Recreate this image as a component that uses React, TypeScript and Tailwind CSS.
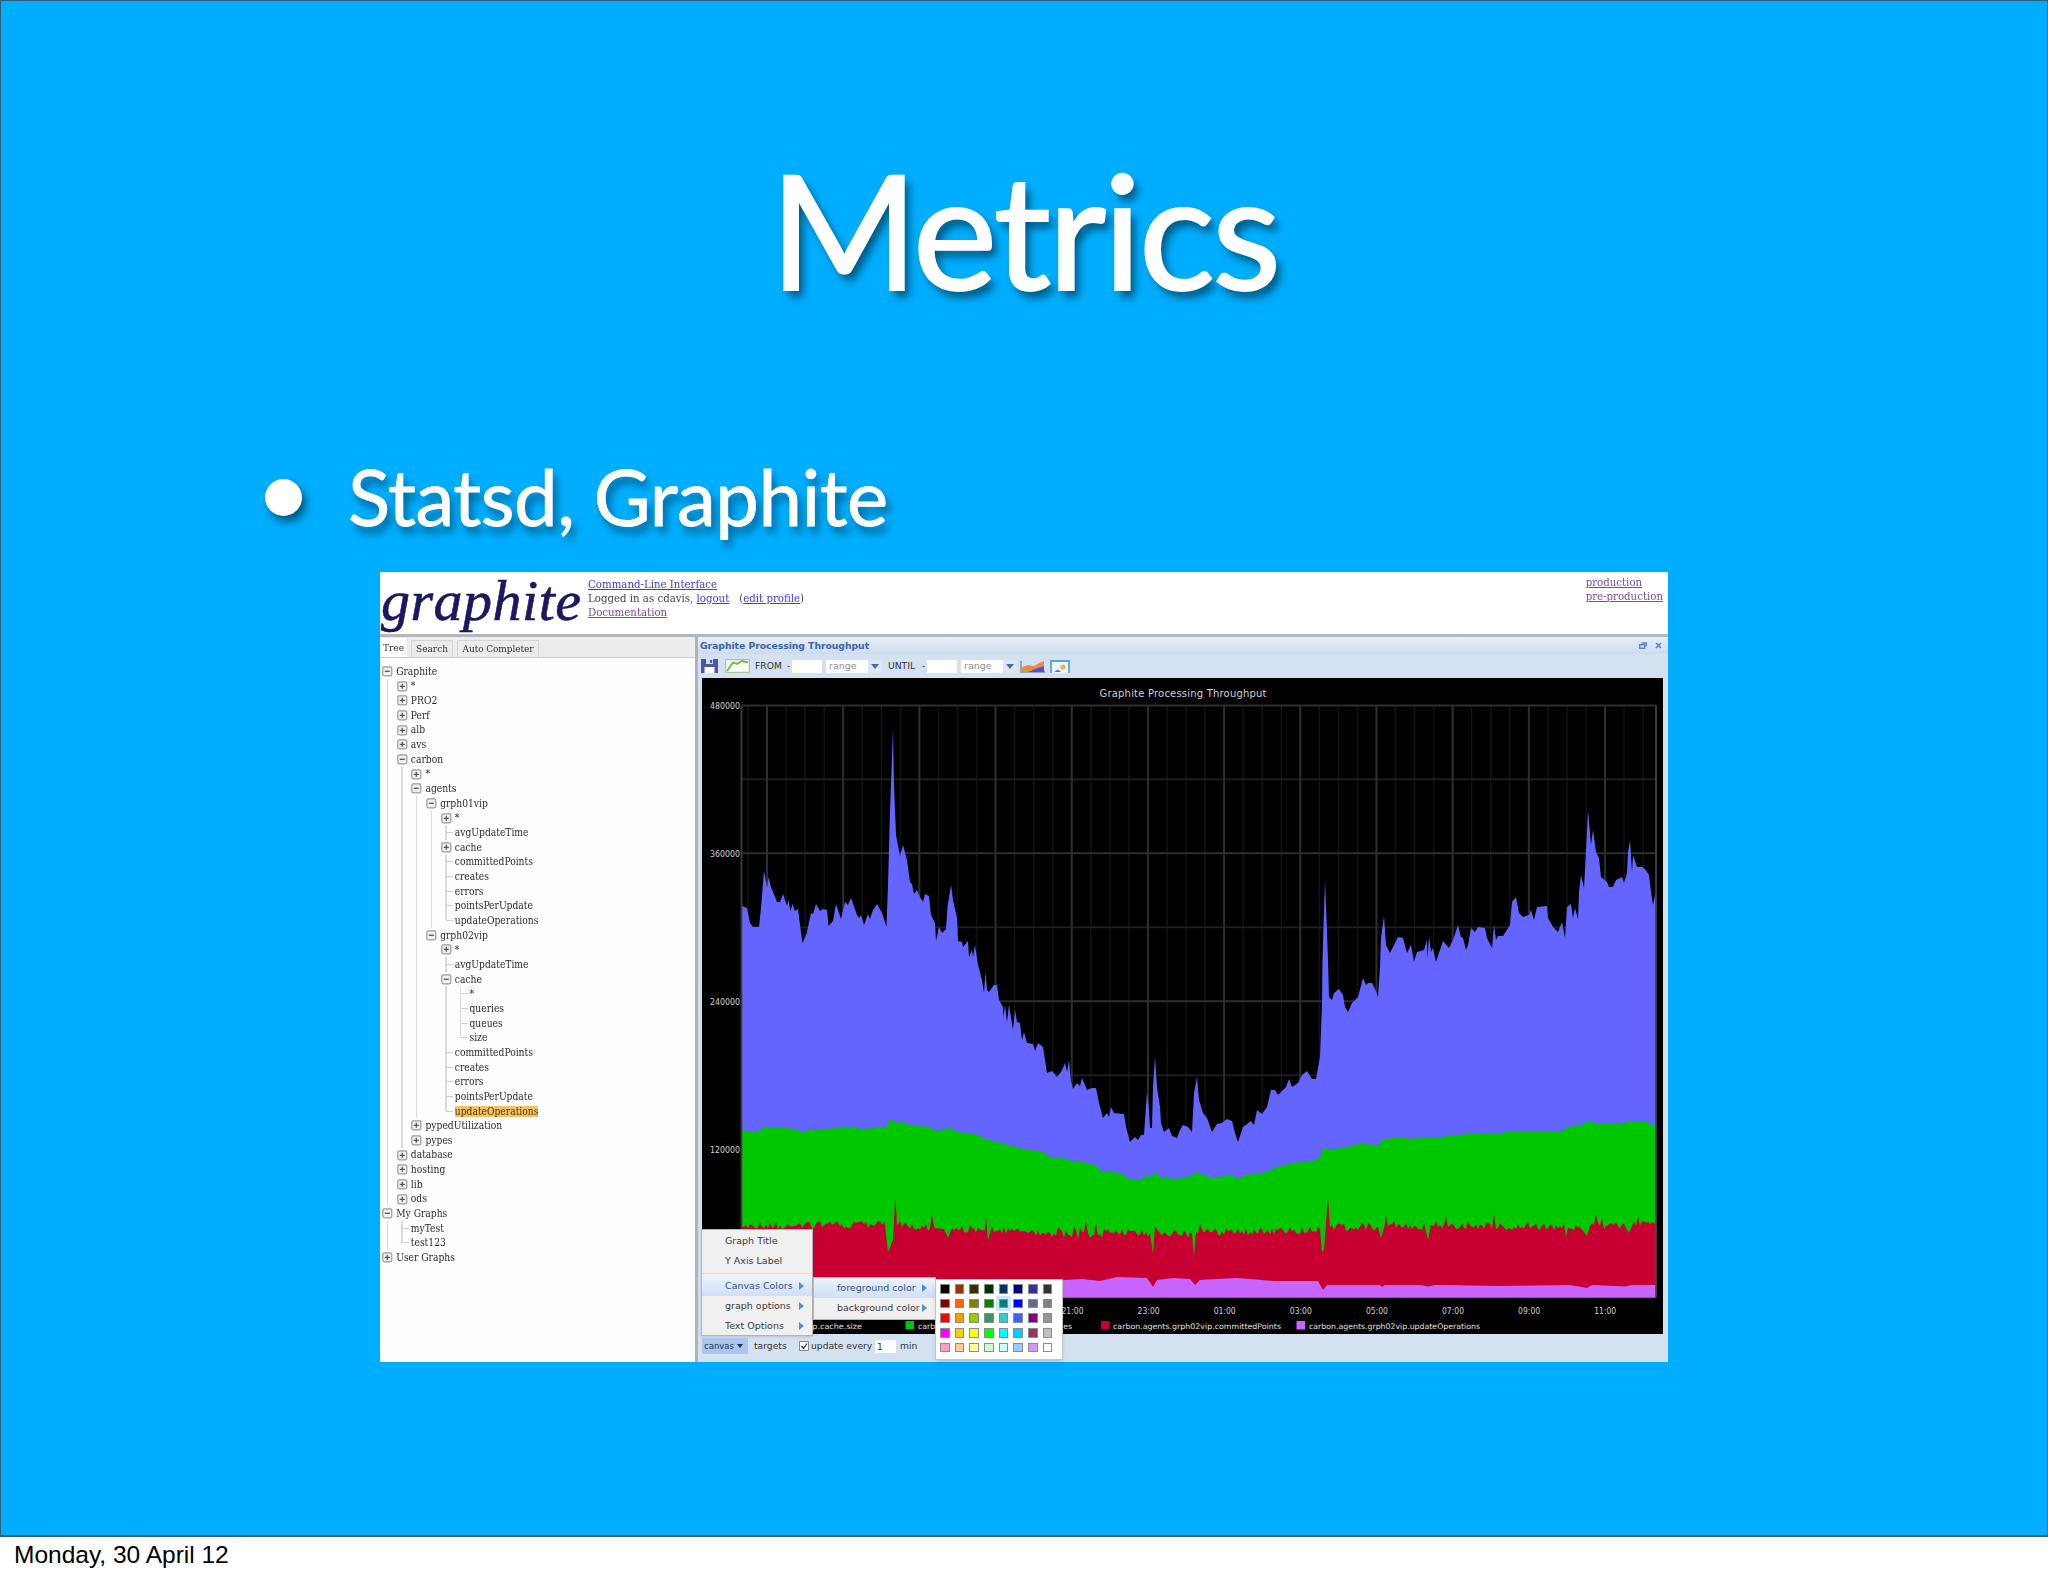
import { twMerge } from 'tailwind-merge'

interface TreeRow {
  guides: string
  kind: '+' | '-' | 'leaf' | 'last'
  label: string
  selected?: boolean
}

const treeRows: TreeRow[] = [
  { guides: '', kind: '-', label: 'Graphite' },
  { guides: '|', kind: '+', label: '*' },
  { guides: '|', kind: '+', label: 'PRO2' },
  { guides: '|', kind: '+', label: 'Perf' },
  { guides: '|', kind: '+', label: 'alb' },
  { guides: '|', kind: '+', label: 'avs' },
  { guides: '|', kind: '-', label: 'carbon' },
  { guides: '||', kind: '+', label: '*' },
  { guides: '||', kind: '-', label: 'agents' },
  { guides: '|||', kind: '-', label: 'grph01vip' },
  { guides: '||||', kind: '+', label: '*' },
  { guides: '||||', kind: 'leaf', label: 'avgUpdateTime' },
  { guides: '||||', kind: '+', label: 'cache' },
  { guides: '||||', kind: 'leaf', label: 'committedPoints' },
  { guides: '||||', kind: 'leaf', label: 'creates' },
  { guides: '||||', kind: 'leaf', label: 'errors' },
  { guides: '||||', kind: 'leaf', label: 'pointsPerUpdate' },
  { guides: '||||', kind: 'last', label: 'updateOperations' },
  { guides: '|||', kind: '-', label: 'grph02vip' },
  { guides: '||| ', kind: '+', label: '*' },
  { guides: '||| ', kind: 'leaf', label: 'avgUpdateTime' },
  { guides: '||| ', kind: '-', label: 'cache' },
  { guides: '||| |', kind: 'leaf', label: '*' },
  { guides: '||| |', kind: 'leaf', label: 'queries' },
  { guides: '||| |', kind: 'leaf', label: 'queues' },
  { guides: '||| |', kind: 'last', label: 'size' },
  { guides: '||| ', kind: 'leaf', label: 'committedPoints' },
  { guides: '||| ', kind: 'leaf', label: 'creates' },
  { guides: '||| ', kind: 'leaf', label: 'errors' },
  { guides: '||| ', kind: 'leaf', label: 'pointsPerUpdate' },
  { guides: '||| ', kind: 'last', label: 'updateOperations', selected: true },
  { guides: '||', kind: '+', label: 'pypedUtilization' },
  { guides: '||', kind: '+', label: 'pypes' },
  { guides: '|', kind: '+', label: 'database' },
  { guides: '|', kind: '+', label: 'hosting' },
  { guides: '|', kind: '+', label: 'lib' },
  { guides: '|', kind: '+', label: 'ods' },
  { guides: '', kind: '-', label: 'My Graphs' },
  { guides: '|', kind: 'leaf', label: 'myTest' },
  { guides: '|', kind: 'last', label: 'test123' },
  { guides: '', kind: '+', label: 'User Graphs' },
]

const palette = [
  ['#000000', '#993300', '#333300', '#003300', '#003366', '#000080', '#333399', '#333333'],
  ['#800000', '#ff6600', '#808000', '#008000', '#008080', '#0000ff', '#666699', '#808080'],
  ['#ff0000', '#ff9900', '#99cc00', '#339966', '#33cccc', '#3366ff', '#800080', '#969696'],
  ['#ff00ff', '#ffcc00', '#ffff00', '#00ff00', '#00ffff', '#00ccff', '#993366', '#c0c0c0'],
  ['#ff99cc', '#ffcc99', '#ffff99', '#ccffcc', '#ccffff', '#99ccff', '#cc99ff', '#ffffff'],
]

const LEFT = 742
const RIGHT = 1655.5
const TOP = 705.5
const BOTTOM = 1297.5

const cacheSize =
  '742,906 747,908 750,923 753,927 759,927 761,908 764,871 765,876 767,888 768.5,877 771,887 777,902 780,902 783,894 787,906 788.5,900 790.5,911 792.5,904 795,911 798,909 800,925 802.5,943 806.5,934 811,913 813,914 816,904 820,911 823,909 827,910 828.5,926 833,921 836,904 841,919 845,902 848,905 851,898 857,915 859,918 861,915 864,925 868,914 870,919 873,910 877,904 882,913 886.5,927 888,885 890,812 893,728 894,785 896,835 900,856 903,845 907,860 910,882 912,884 914,894 917,890 920,897 923,902 925,894 929,896 931,915 935,923 936,941 939,927 942,933 946,929 947.5,907 951,885 953,900 957,918 958,941 962,942 963,947 968,941 969,957 972,950 973,957 975,945 978,965 982,980 984,993 985.5,972 987,990 989,992 994,985 997,985 999,1000 1003,1007 1003.5,1017 1005,1005 1007,1022 1009,1005 1013,1030 1015,1010 1017,1022 1020,1023 1022,1040 1024,1032 1027,1043 1033,1044 1035,1051 1038,1043 1043,1047 1045,1060 1047,1073 1052,1071 1057,1077 1061,1072 1063,1068 1065,1063 1067,1072 1069,1060 1071,1082 1073,1089 1077,1083 1080,1086 1082,1078 1087,1090 1092,1088 1096,1088 1099,1103 1103,1118 1107,1113 1109,1117 1111,1107 1114,1113 1124,1114 1126,1127 1130,1142 1135,1137 1138,1140 1141,1135 1144,1135 1147,1092 1149,1110 1150,1128 1152,1128 1153,1087 1155,1057 1157,1087 1160,1107 1161,1123 1164,1132 1169,1128 1172,1136 1177,1138 1180,1130 1183,1125 1188,1127 1192,1132 1194,1093 1197,1077 1199,1100 1203,1113 1207,1118 1212,1132 1217,1124 1222,1123 1227,1119 1232,1121 1235,1133 1238,1142 1243,1127 1251,1121 1254,1125 1257,1110 1262,1114 1267,1107 1271,1090 1275,1090 1278,1095 1286,1087 1289,1079 1292,1087 1298,1083 1302,1075 1307,1071 1312,1079 1316,1079 1318,1068 1320,1057 1322,1003 1322.5,960 1325,880 1327,932 1328,960 1329,997 1332,1000 1334,993 1339,989 1343,995 1345,1007 1348,1012 1352,1003 1358,997 1363,978 1366,985 1368,983 1372,983 1375,989 1378,997 1380,967 1381,938 1384,916 1386,945 1390,953 1395,943 1398,937 1403,938 1407,953 1411,945 1414,962 1417,952 1424,950 1427,940 1427.5,958 1429,937 1431,952 1433,948 1436,962 1443,941 1449,948 1453,940 1458,925 1461,937 1463,938 1466,950 1468,945 1471,928 1475,932 1478,927 1485,928 1487,938 1492,948 1494,925 1496,940 1498,936 1503,936 1510,925 1512,902 1516,897 1519,913 1523,917 1529,915 1531,910 1534,920 1537,907 1547,906 1548,918 1553,927 1558,932 1562,922 1565,938 1567,907 1571,904 1573,918 1575,908 1578,919 1579,892 1581,875 1584,888 1586,852 1588,810 1591,845 1593,830 1596,852 1599,858 1601,877 1607,882 1609,887 1613,887 1616,880 1622,877 1624,883 1627,873 1628,852 1630,840 1632,872 1633,855 1637,867 1642,867 1645,869 1649,875 1651,892 1653,905 1655.5,893'

const cacheQueues =
  '742,1130 750,1132 760,1131 763,1127 797,1129 803,1133 808,1130 823,1129 840,1128 850,1127 863,1129 887,1127 889,1122 892,1119 896,1123 903,1122 910,1125 928,1127 937,1131 950,1128 957,1132 975,1134 983,1138 1000,1143 1017,1147 1023,1149 1043,1152 1050,1157 1067,1159 1073,1162 1083,1162 1097,1166 1101,1172 1110,1171 1123,1174 1130,1180 1143,1179 1147,1174 1151,1179 1154,1172 1160,1177 1177,1179 1190,1176 1192,1177 1196,1171 1200,1174 1212,1178 1232,1175 1237,1179 1247,1175 1267,1172 1277,1167 1293,1163 1318,1160 1322,1152 1324,1147 1327,1150 1347,1147 1360,1144 1379,1145 1382,1140 1400,1137 1410,1139 1427,1137 1440,1137 1477,1133 1493,1134 1513,1131 1563,1131 1568,1127 1582,1125 1588,1121 1595,1123 1607,1124 1623,1123 1627,1122 1647,1122 1653,1125 1655.5,1125'

const updateOperations =
  '742,1285 888,1285 893,1290 897,1284 1000,1282 1064,1280 1082,1279 1100,1281 1117,1277 1147,1278 1153,1287 1157,1280 1173,1278 1190,1279 1195,1285 1200,1280 1237,1278 1250,1279 1273,1281 1318,1281 1323,1290 1327,1285 1380,1285 1382,1287 1385,1285 1420,1285 1428,1286.5 1435,1285 1500,1286 1570,1285 1587,1288 1592,1285 1625,1286.5 1632,1285 1655.5,1285'

// Base level of the committed points series, noise is added between the knots
const committedBase: [number, number][] = [
  [742, 1226],
  [885, 1225],
  [888, 1252],
  [893, 1240],
  [895.3, 1195],
  [897, 1224],
  [937, 1228],
  [944, 1229],
  [948, 1238],
  [952, 1228],
  [985, 1230],
  [1050, 1233],
  [1150, 1233],
  [1153, 1254],
  [1155, 1226],
  [1160, 1233],
  [1192, 1234],
  [1194, 1256],
  [1196, 1232],
  [1250, 1232],
  [1320, 1229],
  [1322, 1252],
  [1324, 1250],
  [1328, 1197],
  [1330, 1227],
  [1378, 1227],
  [1381, 1238],
  [1385, 1224],
  [1425, 1227],
  [1428, 1240],
  [1431, 1225],
  [1580, 1227],
  [1587, 1236],
  [1590, 1226],
  [1625, 1226],
  [1629, 1233],
  [1632, 1226],
  [1655.5, 1224],
]

const spikes: Record<number, number> = {
  932: -13,
  986: -14,
  988: 10,
  1086: -12,
  1096: -10,
  1200: -8,
  1386: -8,
  1446: -9,
  1494: -12,
  1566: 10,
  1580: 14,
  1590: -14,
  1596: -12,
  1602: -8,
  1632: -13,
  1638: -9,
}

function buildCommitted() {
  const points: string[] = []
  let seed = 11
  for (let i = 0; i < committedBase.length - 1; i++) {
    const [x0, y0] = committedBase[i]
    const [x1, y1] = committedBase[i + 1]
    points.push(`${x0},${y0}`)
    if (x1 - x0 < 10) continue
    for (let x = Math.ceil((x0 + 1) / 2) * 2; x < x1; x += 2) {
      seed = (seed * 1103515245 + 12345) % 2147483648
      const noise = (seed / 2147483648 - 0.5) * (x > 1050 && x < 1125 ? 13 : 8)
      const y = y0 + ((y1 - y0) * (x - x0)) / (x1 - x0) + (spikes[x] ?? noise)
      points.push(`${x},${y.toFixed(1)}`)
    }
  }
  points.push('1655.5,1222')
  return points.join(' ')
}

const committedPoints = buildCommitted()

const area = (points: string) => `${LEFT},${BOTTOM} ${points} ${RIGHT},${BOTTOM}`

const hours = ['21:00', '23:00', '01:00', '03:00', '05:00', '07:00', '09:00', '11:00']

function Chart() {
  const minor = Array.from({ length: 48 }, (_, i) => 748 + i * 19.045)
  const major = Array.from({ length: 12 }, (_, i) => 767 + i * 76.18)

  return (
    <svg
      viewBox="702 678 961 656"
      className="block h-[656px] w-[961px] bg-black font-['DejaVu_Sans',sans-serif]"
    >
      <g stroke="#131315" strokeWidth="1.5">
        {minor.map((x) => (
          <line key={x} x1={x} x2={x} y1={TOP} y2={BOTTOM} />
        ))}
      </g>
      <g stroke="#1d1d1f" strokeWidth="2">
        {[779.3, 927.3, 1075.3, 1223.3].map((y) => (
          <line key={y} x1={LEFT} x2={RIGHT} y1={y} y2={y} />
        ))}
      </g>
      <g stroke="#2e2e30" strokeWidth="2">
        {major.map((x) => (
          <line key={x} x1={x} x2={x} y1={TOP} y2={BOTTOM} />
        ))}
        {[TOP, 853.3, 1001.3, 1149.3].map((y) => (
          <line key={y} x1={LEFT} x2={RIGHT} y1={y} y2={y} />
        ))}
      </g>
      <polygon points={area(cacheSize)} fill="#6464ff" />
      <polygon points={area(cacheQueues)} fill="#00c800" />
      <polygon points={area(committedPoints)} fill="#c80032" />
      <polygon points={area(updateOperations)} fill="#c864ff" />
      <path
        d={`M${LEFT - 0.5} ${TOP}V${BOTTOM}M${RIGHT + 0.5} ${TOP}V${BOTTOM}`}
        stroke="#4a4a4c"
        strokeOpacity="0.8"
        strokeWidth="2"
      />

      <text x="1099.5" y="696.5" fontSize="10" fill="#d0d0d0" textLength="167">
        Graphite Processing Throughput
      </text>
      <g fontSize="8" fill="#d0d0d0">
        {['480000', '360000', '240000', '120000'].map((label, i) => (
          <text key={label} x="710" y={708.5 + i * 148} textLength="30" lengthAdjust="spacingAndGlyphs">
            {label}
          </text>
        ))}
        {hours.map((hour, i) => (
          <text key={hour} x={1061.5 + i * 76.1} y="1314" textLength="22" lengthAdjust="spacingAndGlyphs">
            {hour}
          </text>
        ))}
      </g>
      <g fontSize="7.6" fill="#e0e0e0">
        <text x="862" y="1328.5" textAnchor="end" textLength="146" lengthAdjust="spacingAndGlyphs">
          carbon.agents.grph02vip.cache.size
        </text>
        <rect x="905.5" y="1321" width="8.5" height="8.5" fill="#00c800" />
        <text x="918" y="1328.5" textLength="154" lengthAdjust="spacingAndGlyphs">
          carbon.agents.grph02vip.cache.queues
        </text>
        <rect x="1101" y="1321" width="8.5" height="8.5" fill="#c80032" />
        <text x="1113" y="1328.5" textLength="168" lengthAdjust="spacingAndGlyphs">
          carbon.agents.grph02vip.committedPoints
        </text>
        <rect x="1296.5" y="1321" width="8.5" height="8.5" fill="#c864ff" />
        <text x="1309" y="1328.5" textLength="171" lengthAdjust="spacingAndGlyphs">
          carbon.agents.grph02vip.updateOperations
        </text>
      </g>
    </svg>
  )
}

function Guide({ half = false }: { half?: boolean }) {
  return (
    <span className="flex w-[14.66px] shrink-0 justify-center self-stretch">
      <span className={twMerge('w-[1.5px] bg-[#dadada]', half ? 'h-1/2' : 'h-full')} />
    </span>
  )
}

function Toggle({ open }: { open: boolean }) {
  return (
    <svg viewBox="0 0 14.66 14.66" className="size-[14.66px] shrink-0">
      <rect x="2.8" y="2.8" width="9" height="9" rx="1.5" fill="#f0f0f0" stroke="#9a9a9a" strokeWidth="1.2" />
      <path d={open ? 'M4.8 7.3h5' : 'M4.8 7.3h5M7.3 4.8v5'} stroke="#555" strokeWidth="1.3" />
    </svg>
  )
}

function TreeItem({ row }: { row: TreeRow }) {
  return (
    <li className="flex h-[14.66px] items-center">
      {row.guides.split('').map((guide, i) =>
        guide === '|' ? <Guide key={i} /> : <span key={i} className="w-[14.66px] shrink-0" />
      )}
      {row.kind === '+' || row.kind === '-' ? (
        <Toggle open={row.kind === '-'} />
      ) : (
        <span className="flex shrink-0 items-center self-stretch">
          <Guide half={row.kind === 'last'} />
          <span className="-ml-[7px] h-px w-[7px] bg-[#cfcfcf]" />
        </span>
      )}
      <span
        className={twMerge(
          'ml-[1.5px] text-[10.2px] leading-[11px] whitespace-nowrap text-[#2a2a2a]',
          row.selected ? 'bg-[#f7c264] text-[#4a3a10]' : ''
        )}
      >
        {row.label}
      </span>
    </li>
  )
}

function Sidebar() {
  return (
    <div className="w-[315px] shrink-0 bg-[#fefefe] font-['DejaVu_Serif_Condensed','DejaVu_Serif',serif]">
      <div className="flex h-[20.5px] items-end border-b border-[#cfcdc8] bg-[#ececea] text-[10px] text-[#333]">
        <div className="flex h-[19px] w-[27px] items-center bg-white pl-[3px]">Tree</div>
        <div className="ml-1 flex h-[17px] w-[42px] items-center justify-center border border-b-0 border-[#d6d4ce]">
          Search
        </div>
        <div className="ml-1 flex h-[17px] w-[82px] items-center justify-center border border-b-0 border-[#d6d4ce] whitespace-nowrap tracking-[-0.1px]">
          Auto Completer
        </div>
      </div>
      <ul className="pt-[6.5px]">
        {treeRows.map((row, i) => (
          <TreeItem key={i} row={row} />
        ))}
      </ul>
    </div>
  )
}

function RangeCombo() {
  return (
    <div className="flex h-[13px] items-center">
      <span className="h-full w-[42px] bg-white pl-[3px] text-[9.5px] leading-[12px] text-[#8f8f8f]">range</span>
      <span className="flex h-full w-[14px] items-center justify-center bg-[#dde7f4]">
        <svg viewBox="0 0 8 5" className="h-[5px] w-2">
          <path d="M0 0h8L4 5z" fill="#4d6a9a" />
        </svg>
      </span>
    </div>
  )
}

function Toolbar() {
  return (
    <div className="flex h-[24px] items-center pl-[3px] text-[9.2px] text-[#333]">
      <svg viewBox="0 0 17 14" className="h-[14px] w-[17px]">
        <path d="M0 0h17v14H0z" fill="#4c56a4" />
        <path d="M5 0h7v5H5z" fill="#d5dcec" />
        <path d="M9 1h2v3H9z" fill="#4c56a4" />
        <path d="M3.5 8h10v6h-10z" fill="#fff" />
      </svg>
      <svg viewBox="0 0 25 14" className="ml-[7px] h-[14px] w-[25px]">
        <path d="M.7.7h23.6v12.6H.7z" fill="#fbfdf9" stroke="#a9c79b" strokeWidth="1.2" />
        <path d="M2 12 8 3.5l4 1.5 5-3 6 1.5" fill="none" stroke="#78b74f" strokeWidth="2" />
      </svg>
      <span className="ml-[5px] w-[32px]">FROM</span>
      <span className="w-[5px]">-</span>
      <span className="h-[13px] w-[30px] bg-white" />
      <span className="w-[4px]" />
      <RangeCombo />
      <span className="ml-[6px] w-[34px]">UNTIL</span>
      <span className="w-[5px]">-</span>
      <span className="h-[13px] w-[30px] bg-white" />
      <span className="w-[4px]" />
      <RangeCombo />
      <svg viewBox="0 0 25 13" className="ml-[3px] h-[13px] w-[25px]">
        <path d="M1 1v11h24" fill="none" stroke="#8a8a9a" strokeWidth="1.4" />
        <path d="M2 11V7l6-2 6 1 5-3 5-2v6L10 11z" fill="#f08a3c" />
        <path d="M8 12 15 9l9-3v6z" fill="#4a4fe0" />
      </svg>
      <svg viewBox="0 0 20 13" className="ml-[5px] h-[13px] w-5">
        <path d="M1 13V1h18v12" fill="#edf5fc" stroke="#5aa3dc" strokeWidth="1.8" />
        <circle cx="13" cy="7" r="2.6" fill="#f7b53a" />
        <path d="M4 12 8 9.500l3 2.500z" fill="#4c7cc4" />
      </svg>
    </div>
  )
}

function MenuItem({ label, arrow = false, active = false }: { label: string; arrow?: boolean; active?: boolean }) {
  return (
    <div
      className={twMerge(
        'flex h-[19.6px] items-center justify-between pr-[8px] pl-[23px] text-[9.5px] whitespace-nowrap text-[#3a3a3a]',
        active ? 'bg-linear-to-b from-[#eaf2fc] to-[#cfdff6] text-[#34527e]' : ''
      )}
    >
      {label}
      {arrow && (
        <svg viewBox="0 0 5 8" className="h-2 w-[5px]">
          <path d="M0 0v8l5-4z" fill="#4f8fcf" />
        </svg>
      )}
    </div>
  )
}

function ContextMenus() {
  return (
    <>
      <div className="absolute top-[591.5px] left-[3px] h-[107px] w-[112px] border border-[#b5b5b5] bg-[#f0f0f0] pt-[2px] shadow">
        <MenuItem label="Graph Title" />
        <MenuItem label="Y Axis Label" />
        <div className="mt-[2px] mb-[3px] border-b border-[#dcdcdc]" />
        <MenuItem label="Canvas Colors" arrow active />
        <MenuItem label="graph options" arrow />
        <MenuItem label="Text Options" arrow />
      </div>
      <div className="absolute top-[639.5px] left-[115px] h-[43px] w-[123px] border border-[#b5b5b5] bg-[#f0f0f0] pt-px shadow">
        <MenuItem label="foreground color" arrow active />
        <MenuItem label="background color" arrow />
      </div>
      <div className="absolute top-[641.5px] left-[236.5px] grid h-[81px] w-[128px] grid-cols-[repeat(8,14.67px)] grid-rows-[repeat(5,14.67px)] border border-[#c4c4c4] bg-white pt-[2px] pl-[2px] shadow-md">
        {palette.flat().map((color) => (
          <span
            key={color}
            className={twMerge(
              'flex items-center justify-center',
              color === '#008080' ? 'bg-[#d3e3f8]' : ''
            )}
          >
            <span className="size-[9.5px] border border-[#8c8c8c]" style={{ backgroundColor: color }} />
          </span>
        ))}
      </div>
    </>
  )
}

function GraphWindow() {
  return (
    <div className="relative flex flex-1 flex-col border-l-[3px] border-[#aeb4ba] bg-[#d3e1f1] font-['DejaVu_Sans',sans-serif]">
      <div className="flex h-[17px] items-center justify-between bg-linear-to-b from-[#e6eef8] to-[#ccdcf0] pr-[6px] pl-[2px]">
        <h2 className="text-[9.3px] font-bold tracking-[-0.06px] whitespace-nowrap text-[#3b63a8]">
          Graphite Processing Throughput
        </h2>
        <div className="flex gap-[8px]">
          <svg viewBox="0 0 8 7" className="h-[7px] w-2" fill="none" stroke="#5a83bd" strokeWidth="1.4">
            <path d="M2.500 1h5v3.500M.7 2.700h5v3.500h-5z" />
          </svg>
          <svg viewBox="0 0 7 7" className="size-[7px]" stroke="#5a83bd" strokeWidth="1.600">
            <path d="m1 1 5 5M6 1 1 6" />
          </svg>
        </div>
      </div>
      <Toolbar />
      <div className="pl-[4px]">
        <Chart />
      </div>
      <div className="flex flex-1 items-start pt-[4px] pl-[4px] text-[9.2px] text-[#333]">
        <div className="flex h-[16px] w-[46px] items-center gap-[3px] bg-[#a9c6ec] pl-[2px] text-[8.500px] text-[#1f3558]">
          canvas
          <svg viewBox="0 0 6 4" className="h-1 w-1.5">
            <path d="M0 0h6L3 4z" fill="#1f3558" />
          </svg>
        </div>
        <div className="flex h-[16px] items-center">
          <span className="ml-[6px] w-[45px]">targets</span>
          <svg viewBox="0 0 10 10" className="size-[10px]">
            <path d="M.5.5h9v9h-9z" fill="#fff" stroke="#888" />
            <path d="m2.500 5 2 2.500 3.500-5" fill="none" stroke="#333" strokeWidth="1.300" />
          </svg>
          <span className="ml-[2px] w-[64px] whitespace-nowrap">update every</span>
          <span className="h-[13px] w-[21px] bg-white pl-[2px] leading-[13px]">1</span>
          <span className="ml-[4px]">min</span>
        </div>
      </div>
      <ContextMenus />
    </div>
  )
}

function GraphiteApp() {
  return (
    <div className="flex h-[790px] w-[1288px] flex-col bg-white">
      <div className="flex flex-1 flex-col blur-[0.7px]">
        <header className="flex h-[65px] shrink-0 border-b-[3px] border-[#b4b8bc] font-['DejaVu_Serif_Condensed','DejaVu_Serif',serif] text-[11.35px] leading-[14px] whitespace-nowrap text-[#444]">
          <div className="w-[208px] pl-[1px] font-['Liberation_Serif',serif] text-[58px] leading-[57px] tracking-[0.5px] text-[#1b1760] italic [-webkit-text-stroke:0.6px_#1b1760]">
            graphite
          </div>
          <div className="pt-[4.5px]">
            <p className="text-[#3a3af0] underline">Command-Line Interface</p>
            <p>
              Logged in as cdavis, <span className="text-[#3a3af0] underline">logout</span>
              <span className="pl-[10px]">(</span>
              <span className="text-[#3a3af0] underline">edit profile</span>)
            </p>
            <p className="text-[#7a4aa8] underline">Documentation</p>
          </div>
          <div className="mr-[5px] ml-auto pt-[2.5px] text-[#7a4aa8] underline">
            <p>production</p>
            <p>pre-production</p>
          </div>
        </header>
        <div className="flex flex-1">
          <Sidebar />
          <GraphWindow />
        </div>
      </div>
    </div>
  )
}

export default function App() {
  return (
    <div className="flex h-[1576px] w-[2048px] flex-col overflow-hidden bg-white">
      <main className="h-[1537px] border border-b-2 border-[#2b5f7a] bg-[#00aeff] font-['Lato',sans-serif] text-white">
        <h1 className="pt-[131px] pb-[3px] text-center text-[160px] leading-[192px] tracking-[-3px] [-webkit-text-stroke:2px_white] [text-shadow:5px_7px_9px_rgba(0,0,0,0.5)]">
          Metrics
        </h1>
        <div className="flex h-[245px] items-end pb-[29px] pl-[264px]">
          <span className="mb-[27px] size-[37px] rounded-full bg-white shadow-[4px_6px_8px_rgba(0,0,0,0.5)]" />
          <p className="ml-[46px] text-[78px] leading-[94px] tracking-[-0.5px] whitespace-nowrap [-webkit-text-stroke:0.8px_white] [text-shadow:4px_7px_8px_rgba(0,0,0,0.45)]">
            Statsd, Graphite
          </p>
        </div>
        <div className="ml-[379px]">
          <GraphiteApp />
        </div>
      </main>
      <footer className="pl-[14px] font-['Liberation_Sans',sans-serif] text-[24.500px] leading-[35px] text-black">
        Monday, 30 April 12
      </footer>
    </div>
  )
}
